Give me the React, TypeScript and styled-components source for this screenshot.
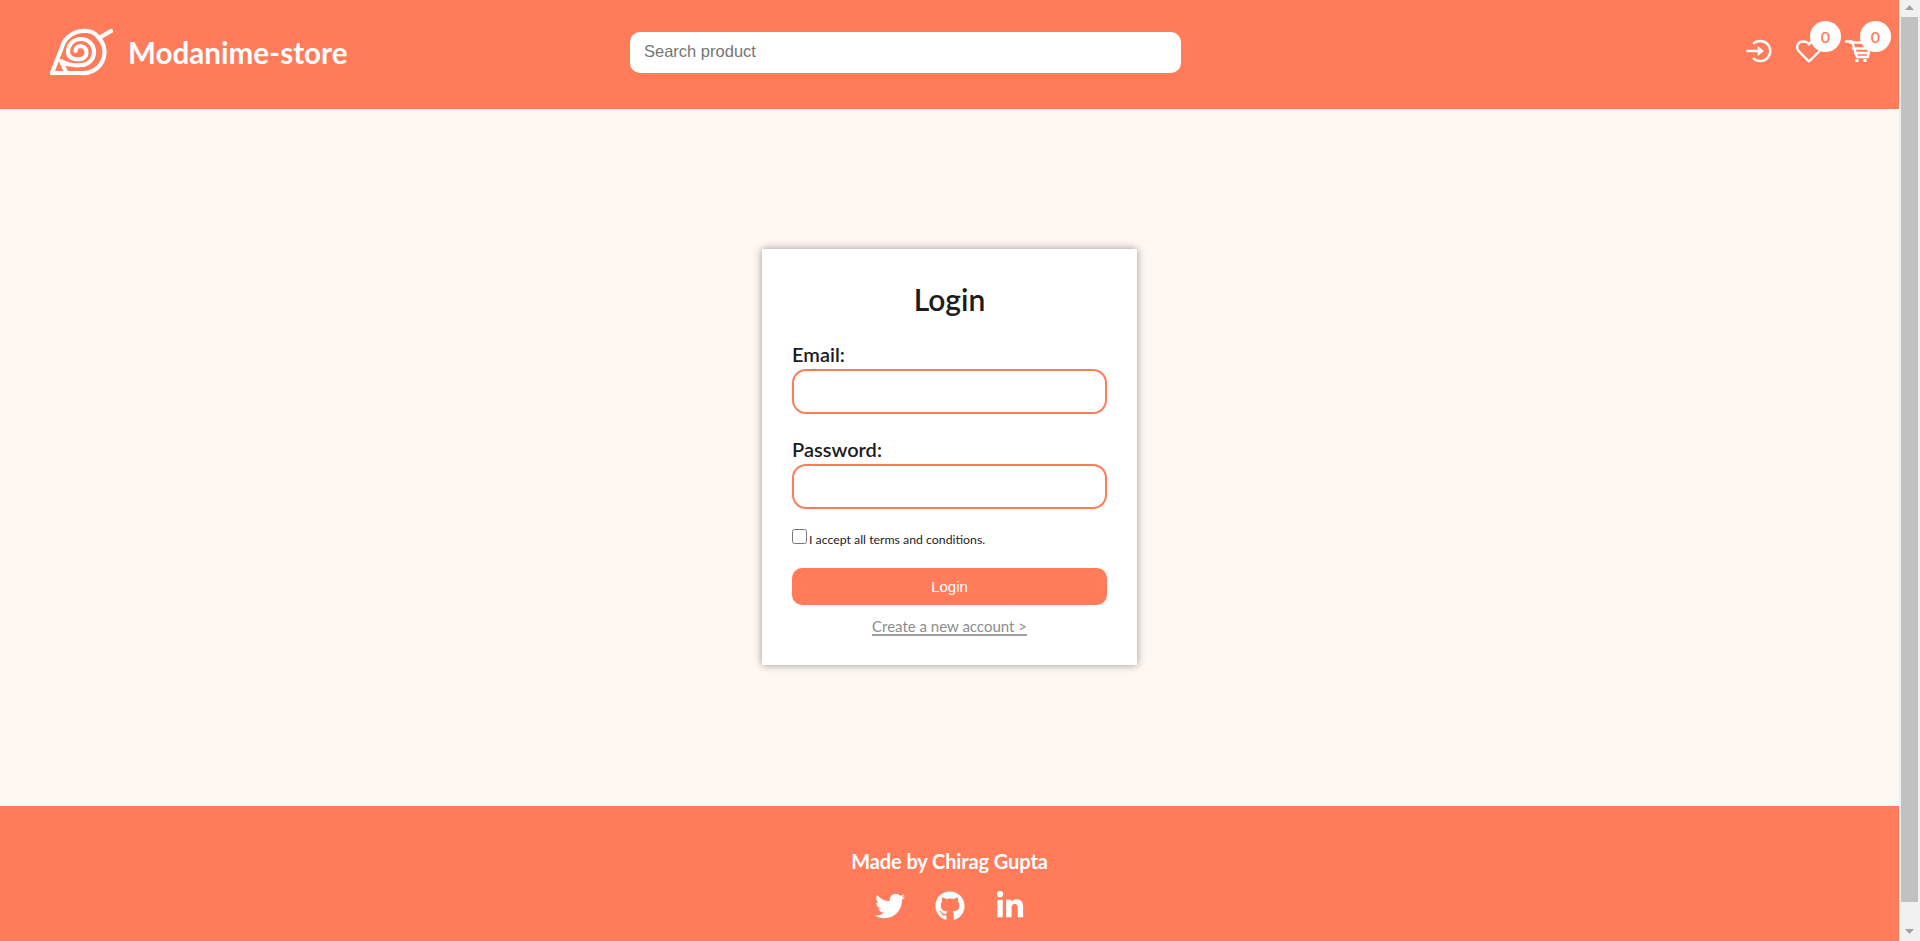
import React from 'react';
import styled, { createGlobalStyle } from 'styled-components';
import { BiLogInCircle } from 'react-icons/bi';
import { FaTwitter, FaGithub, FaLinkedinIn } from 'react-icons/fa';

const GlobalStyle = createGlobalStyle`
  * { box-sizing: border-box; }
  html, body { height: 100%; overflow: hidden; }
  body {
    margin: 0;
    font-family: Lato, "Liberation Sans", sans-serif;
    color: #1c1c1c;
    background: #fff7f1;
  }
`;

const accent = '#ff7b5a';

const Logo = () => (
  <LogoMark viewBox="10 12 64 48" aria-hidden="true">
    <path d="M12 57 H41 A21 21 0 0 0 59 22 L71 15" />
    <path d="M12 57 L22 31 C25 20 36 14 47 15 C52 15 56 18 59 22" />
    <path d="M26 56 L21 45 C26 48 34 50 41 49 A13 13 0 0 0 41 23 C33 23 28 29 28 36 C28 41 33 44 39 43 A6.5 6.5 0 0 0 41 30 C38 30 35.5 32 35.5 35" />
  </LogoMark>
);

const HeartIcon = () => (
  <HeaderSvg viewBox="9 20.5 30 30" aria-hidden="true">
    <path d="M24 46 L14 36 C10 31 13 26 18 26 C21 26 23 27 24 29 C25 27 27 26 30 26 C35 26 38 31 34 36 Z" />
  </HeaderSvg>
);

const CartIcon = () => (
  <HeaderSvg viewBox="9 20.5 30 30" aria-hidden="true">
    <path d="M11 26 H17 L22 41.5 H33" />
    <path d="M18 33 H35 M20 37.5 H34 M15 27 H35 L33 41" />
    <CartWheel cx="22" cy="45" r="1.8" />
    <CartWheel cx="30" cy="45" r="1.8" />
  </HeaderSvg>
);

const App: React.FC = () => {
  return (
    <Shell>
      <GlobalStyle />
      <Page>
        <Header>
          <Brand>
            <Logo />
            <BrandName>Modanime-store</BrandName>
          </Brand>
          <SearchInput placeholder="Search product" />
          <Actions>
            <ActionItem>
              <BiLogInCircle />
            </ActionItem>
            <ActionItem>
              <HeartIcon />
              <Badge>0</Badge>
            </ActionItem>
            <ActionItem>
              <CartIcon />
              <Badge>0</Badge>
            </ActionItem>
          </Actions>
        </Header>
        <Main>
          <Card>
            <Title>Login</Title>
            <Field>
              <Label>Email:</Label>
              <TextInput type="email" />
            </Field>
            <Field>
              <Label>Password:</Label>
              <TextInput type="password" />
            </Field>
            <Terms>
              <input type="checkbox" />
              <span>I accept all terms and conditions.</span>
            </Terms>
            <SubmitButton>Login</SubmitButton>
            <CreateLink href="#">Create a new account &gt;</CreateLink>
          </Card>
        </Main>
        <Footer>
          <FooterTitle>Made by Chirag Gupta</FooterTitle>
          <Socials>
            <FaTwitter />
            <FaGithub />
            <FaLinkedinIn />
          </Socials>
        </Footer>
      </Page>
      <ScrollTrack>
        <ScrollArrow viewBox="0 0 9 5" aria-hidden="true">
          <path d="M0 5 L4.5 0 L9 5 Z" />
        </ScrollArrow>
        <ScrollThumb />
        <ScrollArrow viewBox="0 0 9 5" aria-hidden="true">
          <path d="M0 0 L9 0 L4.5 5 Z" />
        </ScrollArrow>
      </ScrollTrack>
    </Shell>
  );
};

const Shell = styled.div`
  display: flex;
  height: 100vh;
  overflow: hidden;
`;

const Page = styled.div`
  flex: 1;
  min-width: 0;
  display: flex;
  flex-direction: column;
`;

const ScrollTrack = styled.div`
  flex: 0 0 21px;
  display: flex;
  flex-direction: column;
  align-items: center;
  padding: 5px 0 7px;
  background: #f1f1f1;
`;

const ScrollArrow = styled.svg`
  flex: none;
  width: 9px;
  height: 5px;
  fill: #a3a3a3;
`;

const ScrollThumb = styled.div`
  width: 17px;
  height: 885px;
  margin: 7px 0 27px;
  background: #c1c1c1;
`;

const Header = styled.header`
  flex: none;
  display: flex;
  align-items: center;
  height: 109px;
  padding: 0 25px 0 50px;
  background: ${accent};
`;

const Brand = styled.div`
  display: flex;
  align-items: center;
  gap: 14px;
  width: 580px;
`;

const LogoMark = styled.svg`
  width: 64px;
  height: 48px;
  margin-top: -6px;
  fill: none;
  stroke: #fff;
  stroke-width: 4.2;
  stroke-linecap: round;
  stroke-linejoin: round;
`;

const BrandName = styled.span`
  margin-top: -4px;
  font-size: 29.6px;
  font-weight: 700;
  color: #fff;
`;

const SearchInput = styled.input`
  width: 551px;
  height: 41px;
  margin-top: -5px;
  margin-right: auto;
  padding: 0 14px 2px;
  border: none;
  border-radius: 10px;
  background: #fff;
  font-family: "Liberation Sans", sans-serif;
  font-size: 16.5px;
  &::placeholder { color: #757575; }
`;

const Actions = styled.div`
  display: flex;
  align-items: center;
  gap: 20px;
  margin-top: -8px;
`;

const ActionItem = styled.div`
  position: relative;
  display: flex;
  font-size: 30px;
  color: #fff;
`;

const HeaderSvg = styled.svg`
  width: 30px;
  height: 30px;
  fill: none;
  stroke: #fff;
  stroke-width: 2.4;
  stroke-linecap: round;
  stroke-linejoin: round;
`;

const CartWheel = styled.circle`
  fill: #fff;
  stroke: none;
`;

const Badge = styled.span`
  position: absolute;
  top: -15px;
  left: 16px;
  display: flex;
  align-items: center;
  justify-content: center;
  width: 31px;
  height: 31px;
  border-radius: 50%;
  background: #fff;
  color: ${accent};
  font-size: 16px;
  font-weight: 600;
`;

const Main = styled.main`
  flex: none;
  display: flex;
  align-items: center;
  justify-content: center;
  height: 697px;
  padding-bottom: 1px;
`;

const Card = styled.div`
  display: flex;
  flex-direction: column;
  width: 375px;
  height: 416px;
  padding: 32px 30px 0;
  background: #fff;
  box-shadow: 0 0 8px rgba(0, 0, 0, 0.4);
`;

const Title = styled.h2`
  margin: 0 0 24px;
  font-size: 30px;
  font-weight: 600;
  line-height: 37px;
  text-align: center;
`;

const Field = styled.div`
  display: flex;
  flex-direction: column;
  & + & { margin-top: 23px; }
`;

const Label = styled.label`
  margin-bottom: 3px;
  font-size: 20px;
  font-weight: 600;
  line-height: 24px;
`;

const TextInput = styled.input`
  height: 45px;
  border: 2px solid ${accent};
  border-radius: 14px;
  outline: none;
`;

const Terms = styled.label`
  display: flex;
  gap: 2px;
  height: 19px;
  margin: 20px 0;
  font-size: 12.3px;
  line-height: 16px;
  input { flex: none; width: 15px; height: 15px; margin: 0; }
  span { align-self: flex-end; }
`;

const SubmitButton = styled.button`
  flex: none;
  height: 37px;
  border: none;
  border-radius: 10px;
  background: ${accent};
  color: #fff;
  font-family: "Liberation Sans", sans-serif;
  font-size: 15px;
`;

const CreateLink = styled.a`
  align-self: center;
  margin-top: 13px;
  border-bottom: 2px solid #a0a0a0;
  color: #8d8d8d;
  font-size: 15px;
  line-height: 16px;
  text-decoration: none;
`;

const Footer = styled.footer`
  flex: none;
  display: flex;
  flex-direction: column;
  align-items: center;
  height: 158px;
  padding-top: 43px;
  background: ${accent};
  color: #fff;
`;

const FooterTitle = styled.h3`
  margin: 0 0 18px;
  font-size: 20px;
  font-weight: 700;
  line-height: 24px;
  letter-spacing: -0.1px;
`;

const Socials = styled.div`
  display: flex;
  gap: 30px;
  font-size: 30px;
`;

export default App;
